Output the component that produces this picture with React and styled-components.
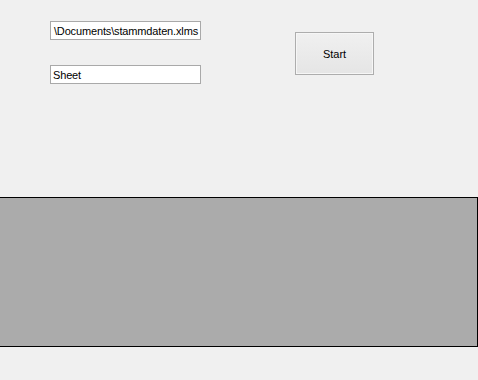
import styled, { createGlobalStyle } from "styled-components";

const GlobalStyle = createGlobalStyle`
  html, body {
    margin: 0;
    padding: 0;
    background: #f0f0f0;
  }
  body {
    width: 478px;
    height: 380px;
    overflow: hidden;
    font-family: "Liberation Sans", Arial, sans-serif;
  }
`;

const Window = styled.div`
  display: flex;
  flex-direction: column;
  width: 478px;
  height: 380px;
  background: #f0f0f0;
`;

const Top = styled.div`
  display: flex;
  align-items: flex-start;
  height: 197px;
`;

const Fields = styled.div`
  display: flex;
  flex-direction: column;
  gap: 25px;
  margin: 21px 0 0 50px;
`;

const TextBox = styled.div`
  display: flex;
  justify-content: ${(p) => (p.$end ? "flex-end" : "flex-start")};
  align-items: center;
  box-sizing: border-box;
  width: 151px;
  height: 19px;
  padding: 0 2px;
  overflow: hidden;
  white-space: nowrap;
  background: #fff;
  border: 1px solid #a9a9a9;
  font-size: 11px;
  letter-spacing: -0.15px;
  color: #000;
`;

const Button = styled.button`
  box-sizing: border-box;
  width: 79px;
  height: 43px;
  margin: 32px 0 0 94px;
  padding: 0;
  border: 1px solid #adadad;
  background: linear-gradient(#f0f0f0, #e5e5e5);
  box-shadow: inset 0 0 0 1px #f6f6f6;
  font-family: "Liberation Sans", Arial, sans-serif;
  font-size: 11px;
  color: #000;
`;

const Panel = styled.div`
  box-sizing: border-box;
  height: 150px;
  background: #ababab;
  border-top: 1px solid #000;
  border-bottom: 1px solid #000;
  border-right: 1px solid #000;
`;

export default function App() {
  return (
    <Window>
      <GlobalStyle />
      <Top>
        <Fields>
          <TextBox $end>\Documents\stammdaten.xlms</TextBox>
          <TextBox>Sheet</TextBox>
        </Fields>
        <Button>Start</Button>
      </Top>
      <Panel />
    </Window>
  );
}
